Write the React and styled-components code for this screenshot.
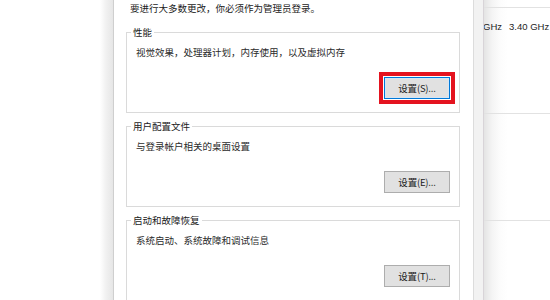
import React from 'react'
import styled, { createGlobalStyle } from 'styled-components'

const GlobalStyle = createGlobalStyle`
  body {
    margin: 0;
    background: #fff;
    font-family: "Noto Sans CJK SC", "Liberation Sans", sans-serif;
    color: #1e1e1e;
  }
`;

const Screen = styled.div`
  display: flex;
  width: 550px;
  height: 300px;
  overflow: hidden;
  background: #fff;
`;

const Backdrop = styled.div`
  width: 100px;
  flex: none;
  background: #fff;
`;

const EdgeShadow = styled.div`
  width: 13px;
  flex: none;
  background: linear-gradient(to right, #fff 0%, #f1f1f1 45%, #e6e6e6 100%);
`;

const Dialog = styled.div`
  flex: none;
  display: flex;
  flex-direction: column;
  padding: 0 13px 0 12px;
  box-sizing: border-box;
  width: 361px;
  border-left: 1px solid #cfcfcf;
  border-right: 1px solid #dcdcdc;
  background: #fff;
`;

const Intro = styled.p`
  margin: 0 0 8px 4px;
  font-size: 9.5px;
  line-height: 16px;
  color: #1a1a1a;
`;

const Group = styled.fieldset`
  margin: 0 0 5px;
  padding: 4px 9px 13px 9px;
  border: 1px solid #dadada;
  min-width: 0;
  display: flex;
  flex-direction: column;
`;

const Legend = styled.legend`
  margin-left: -5px;
  padding: 0 2px;
  font-size: 9.5px;
  line-height: 16px;
  color: #1a1a1a;
`;

const Desc = styled.div`
  font-size: 9.5px;
  line-height: 16px;
  color: #2a2a2a;
`;

const ButtonRow = styled.div`
  display: flex;
  justify-content: flex-end;
  margin-top: 17px;
`;

const Button = styled.button`
  width: 66px;
  height: 22px;
  padding: 0;
  box-sizing: border-box;
  font-family: "Noto Sans CJK SC", "Liberation Sans", sans-serif;
  font-size: 9.5px;
  letter-spacing: -0.2px;
  color: #1a1a1a;
  background: #e1e1e1;
  border: 1px solid ${(p) => (p.$focused ? '#0078d7' : '#adadad')};
  box-shadow: ${(p) => (p.$focused ? 'inset 0 0 0 1px #d6e6f5' : 'none')};
  outline: ${(p) => (p.$marked ? '4px solid #e4131f' : 'none')};
  outline-offset: 1px;
`;

const Band = styled.div`
  width: 9px;
  flex: none;
  background: #f2f2f2;
  border-right: 1px solid #d8d4d8;
`;

const BackWindow = styled.div`
  flex: 1;
  display: flex;
  flex-direction: column;
  overflow: hidden;
  background: linear-gradient(to right, #e4e4e4 0px, #f4f4f4 8px, #fcfcfc 16px, #fff 24px);
`;

const Section = styled.div`
  height: ${(p) => p.$h}px;
  flex: none;
  border-bottom: 1px solid #e2e2e2;
  box-sizing: border-box;
`;

const SpecRow = styled.div`
  display: flex;
  gap: 7px;
  margin: 12px 0 0 -1px;
  font-family: "Liberation Sans", sans-serif;
  font-size: 9.5px;
  line-height: 14px;
  color: #1e1e1e;
  white-space: nowrap;
`;

const groups = [
  {
    title: '性能',
    desc: '视觉效果，处理器计划，内存使用，以及虚拟内存',
    label: '设置(S)...',
    focused: true,
  },
  { title: '用户配置文件', desc: '与登录帐户相关的桌面设置', label: '设置(E)...' },
  { title: '启动和故障恢复', desc: '系统启动、系统故障和调试信息', label: '设置(T)...' },
];

export default function App() {
  return (
    <>
      <GlobalStyle />
      <Screen>
        <Backdrop />
        <EdgeShadow />
        <Dialog>
          <Intro>要进行大多数更改，你必须作为管理员登录。</Intro>
          {groups.map((g) => (
            <Group key={g.title}>
              <Legend>{g.title}</Legend>
              <Desc>{g.desc}</Desc>
              <ButtonRow>
                <Button type="button" $focused={g.focused} $marked={g.focused}>
                  {g.label}
                </Button>
              </ButtonRow>
            </Group>
          ))}
        </Dialog>
        <Band />
        <BackWindow>
          <Section $h={8} />
          <Section $h={106}>
            <SpecRow>
              <span>GHz</span>
              <span>3.40 GHz</span>
            </SpecRow>
          </Section>
          <Section $h={107} />
        </BackWindow>
      </Screen>
    </>
  );
}
